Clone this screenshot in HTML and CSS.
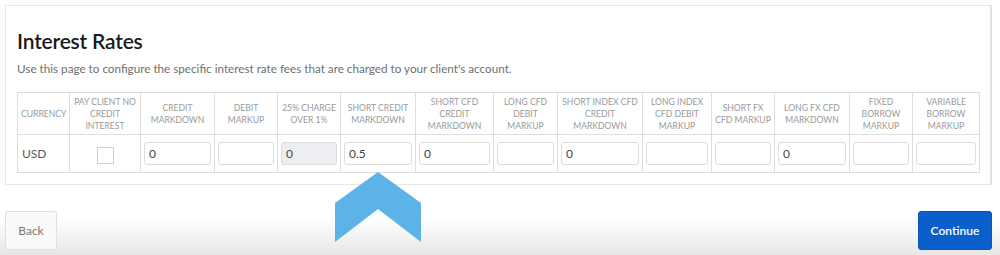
FILE: index.html
```html
<!DOCTYPE html>
<html>
<head>
<meta charset="utf-8">
<link rel="stylesheet" href="styles.css">
</head>
<body>
<div class="page">
  <section class="card">
    <h1 class="title">Interest Rates</h1>
    <p class="subtitle">Use this page to configure the specific interest rate fees that are charged to your client's account.</p>
    <table class="rates">
      <colgroup>
        <col style="width:52px"><col style="width:71px"><col style="width:74px"><col style="width:63px"><col style="width:63px"><col style="width:75px"><col style="width:78px"><col style="width:64px"><col style="width:85px"><col style="width:69px"><col style="width:63px"><col style="width:75px"><col style="width:63px"><col style="width:67px">
      </colgroup>
      <thead>
        <tr>
          <th class="left">CURRENCY</th>
          <th>PAY CLIENT NO<br>CREDIT<br>INTEREST</th>
          <th>CREDIT<br>MARKDOWN</th>
          <th>DEBIT<br>MARKUP</th>
          <th>25% CHARGE<br>OVER 1%</th>
          <th>SHORT CREDIT<br>MARKDOWN</th>
          <th>SHORT CFD<br>CREDIT<br>MARKDOWN</th>
          <th>LONG CFD<br>DEBIT<br>MARKUP</th>
          <th>SHORT INDEX CFD<br>CREDIT<br>MARKDOWN</th>
          <th>LONG INDEX<br>CFD DEBIT<br>MARKUP</th>
          <th>SHORT FX<br>CFD MARKUP</th>
          <th>LONG FX CFD<br>MARKDOWN</th>
          <th>FIXED<br>BORROW<br>MARKUP</th>
          <th>VARIABLE<br>BORROW<br>MARKUP</th>
        </tr>
      </thead>
      <tbody>
        <tr>
          <td class="cur">USD</td>
          <td class="center"><span class="check"></span></td>
          <td><div class="inp">0</div></td>
          <td><div class="inp"></div></td>
          <td><div class="inp disabled">0</div></td>
          <td><div class="inp">0.5</div></td>
          <td><div class="inp">0</div></td>
          <td><div class="inp"></div></td>
          <td><div class="inp">0</div></td>
          <td><div class="inp"></div></td>
          <td><div class="inp"></div></td>
          <td><div class="inp">0</div></td>
          <td><div class="inp"></div></td>
          <td><div class="inp"></div></td>
        </tr>
      </tbody>
    </table>
  </section>
  <div class="actions">
    <button class="btn back">Back</button>
    <button class="btn continue">Continue</button>
  </div>
  <svg class="chevron" width="86" height="71" viewBox="0 0 86 71"><polygon points="43,0 86,31 86,70 43,37 0,70 0,31" fill="#5cb3e7"/></svg>
</div>
</body>
</html>
```
FILE: styles.css
```css
html, body {
  margin: 0;
  padding: 0;
}
body {
  width: 1000px;
  height: 255px;
  overflow: hidden;
  font-family: Lato, "Liberation Sans", sans-serif;
  background: linear-gradient(to bottom, #ffffff 0px, #ffffff 218px, #f4f4f4 235px, #e6e6e6 255px);
}
.page {
  position: relative;
  padding: 5px 8px 0 5px;
}
.card {
  width: 987px;
  height: 180px;
  box-sizing: border-box;
  border: 1px solid #e6e6e6;
  border-right: 2px solid #e2e2e2;
  background: #fff;
  padding: 22px 12px 0 11px;
}
.title {
  margin: 0;
  font-size: 21px;
  font-weight: 600;
  color: #1a1a1a;
  line-height: 26px;
  letter-spacing: -0.2px;
}
.subtitle {
  margin: 6px 0 0;
  font-size: 11.7px;
  color: #6f6f6f;
  line-height: 16px;
}
.rates {
  margin-top: 16px;
  border-collapse: collapse;
  table-layout: fixed;
  width: 962px;
}
.rates th, .rates td {
  border: 1px solid #dedede;
}
.rates th {
  height: 41px;
  padding: 0;
  font-size: 8.6px;
  font-weight: 400;
  color: #9a9a9a;
  line-height: 12px;
  letter-spacing: 0;
  white-space: nowrap;
  text-align: center;
  vertical-align: middle;
}
.rates th.left {
  text-align: left;
  padding-left: 3px;
}
.rates td {
  height: 37px;
  padding: 0 3px;
  vertical-align: middle;
}
.rates td.cur {
  font-size: 12px;
  color: #5a5a5a;
  padding-left: 4px;
}
.rates td.center {
  text-align: center;
}
.check {
  display: inline-block;
  width: 15px;
  height: 15px;
  border: 1px solid #cfcfcf;
  vertical-align: middle;
}
.inp {
  height: 23px;
  box-sizing: border-box;
  border: 1px solid #dcdcdc;
  border-radius: 3px;
  background: #fff;
  font-size: 12px;
  color: #444;
  line-height: 21px;
  padding-left: 4px;
}
.inp.disabled {
  background: #eceef1;
}
.actions {
  display: flex;
  justify-content: space-between;
  margin-top: 26px;
}
.btn {
  height: 39px;
  box-sizing: border-box;
  border-radius: 3px;
  font-family: Lato, "Liberation Sans", sans-serif;
  font-size: 12px;
  padding: 0;
}
.back {
  width: 52px;
  border: 1px solid #e0e0e0;
  background: #fafafa;
  color: #777;
}
.continue {
  width: 74px;
  border: 1px solid #0a55b8;
  background: #0a5fcb;
  color: #fff;
  font-weight: 600;
}
.chevron {
  position: absolute;
  left: 335px;
  top: 172px;
}
```
